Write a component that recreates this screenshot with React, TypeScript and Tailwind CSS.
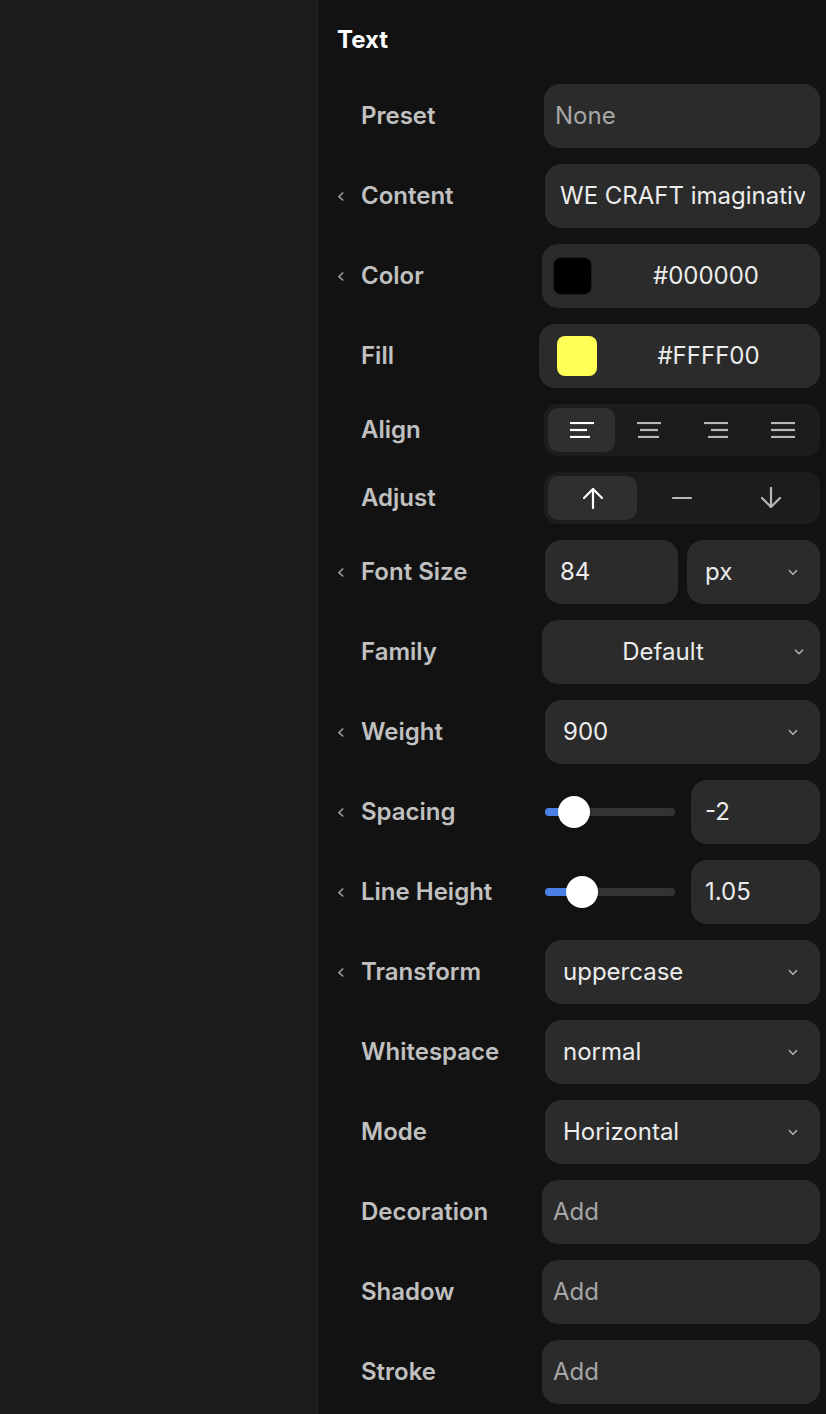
import type { ReactNode } from 'react';

const font = { fontFamily: 'Inter, "Noto Sans", sans-serif' };

// small "‹" toggle next to expandable props
const Caret = () => (
  <svg width="8" height="11" viewBox="0 0 8 11" className="text-[#9c9c9c]">
    <polyline points="6.2,1.5 2,5.5 6.2,9.5" fill="none" stroke="currentColor" strokeWidth="1.7" />
  </svg>
);

const ChevronDown = () => (
  <svg width="10" height="7" viewBox="0 0 10 7" className="text-[#b0b0b0]">
    <polyline points="1,1.2 5,5.2 9,1.2" fill="none" stroke="currentColor" strokeWidth="1.6" />
  </svg>
);

const Row = ({
  label,
  caret,
  tall = true,
  children,
}: {
  label: string;
  caret?: boolean;
  tall?: boolean;
  children: ReactNode;
}) => (
  <div className={tall ? 'flex items-center h-16' : 'flex items-center h-[52px]'}>
    <div className="w-6 shrink-0 flex items-center">{caret && <Caret />}</div>
    <div className="w-[182px] shrink-0 text-[24px] font-semibold text-[#c0c0c0] leading-none">{label}</div>
    <div className="flex-1 flex h-full min-w-0">{children}</div>
  </div>
);

const Field = ({ className = '', children }: { className?: string; children: ReactNode }) => (
  <div className={`flex-1 h-full bg-[#2b2b2b] rounded-[16px] flex items-center text-[24px] min-w-0 ${className}`}>
    {children}
  </div>
);

const Select = ({ value, className = '' }: { value: string; className?: string }) => (
  <Field className={`pl-[18px] pr-[22px] ${className}`}>
    <span className="flex-1 text-[#ececec]">{value}</span>
    <ChevronDown />
  </Field>
);

const Swatch = ({ color, hex, className }: { color: string; hex: string; className: string }) => (
  <Field className={className}>
    <div className={`shrink-0 rounded-[8px] ${color}`} />
    <span className="flex-1 text-center text-[#ececec]">{hex}</span>
  </Field>
);

const AlignIcon = ({ kind, active }: { kind: 'left' | 'center' | 'right' | 'justify'; active?: boolean }) => {
  const lines: Record<string, [number, number][]> = {
    left: [[0, 24], [0, 17], [0, 20]],
    center: [[0, 24], [3, 21], [1, 22]],
    right: [[0, 24], [7, 24], [4, 24]],
    justify: [[0, 24], [0, 24], [0, 24]],
  };
  return (
    <svg width="24" height="16" viewBox="0 0 24 16" className={active ? 'text-white' : 'text-[#b8b8b8]'}>
      {lines[kind].map(([a, b], i) => (
        <line key={i} x1={a} x2={b} y1={1 + i * 7} y2={1 + i * 7} stroke="currentColor" strokeWidth="2.2" />
      ))}
    </svg>
  );
};

const ArrowUp = () => (
  <svg width="22" height="22" viewBox="0 0 22 22" className="text-white">
    <line x1="11" y1="2" x2="11" y2="21" stroke="currentColor" strokeWidth="2.2" strokeLinecap="round" />
    <polyline points="2,11 11,2 20,11" fill="none" stroke="currentColor" strokeWidth="2.2" strokeLinecap="round" strokeLinejoin="round" />
  </svg>
);

const ArrowDown = () => (
  <svg width="22" height="22" viewBox="0 0 22 22" className="text-[#b8b8b8]">
    <line x1="11" y1="1" x2="11" y2="20" stroke="currentColor" strokeWidth="2.2" strokeLinecap="round" />
    <polyline points="2,11 11,20 20,11" fill="none" stroke="currentColor" strokeWidth="2.2" strokeLinecap="round" strokeLinejoin="round" />
  </svg>
);

const Dash = () => (
  <svg width="20" height="4" viewBox="0 0 20 4" className="text-[#b8b8b8]">
    <line x1="1" y1="2" x2="19" y2="2" stroke="currentColor" strokeWidth="2.2" strokeLinecap="round" />
  </svg>
);

const Slider = ({ pos, value }: { pos: number; value: string }) => (
  <div className="flex-1 flex items-center gap-4 ml-px min-w-0">
    <div className="relative flex-1 h-2 rounded-full bg-[#333333]">
      <div className="absolute left-0 top-0 h-2 rounded-full bg-[#4c80e6]" style={{ width: pos }} />
      <div
        className="absolute top-1/2 w-8 h-8 -mt-4 -ml-4 rounded-full bg-white shadow"
        style={{ left: pos }}
      />
    </div>
    <div className="w-[129px] shrink-0 h-full bg-[#2b2b2b] rounded-[16px] flex items-center pl-[14px] text-[24px] text-[#ececec]">
      {value}
    </div>
  </div>
);

const App = () => {
  return (
    <div className="flex w-full h-screen min-h-[1414px] overflow-hidden" style={font}>
      {/* canvas side */}
      <div className="w-[317px] shrink-0 bg-[#1c1c1c]" />
      <div className="w-px shrink-0 bg-[#262626]" />

      {/* inspector */}
      <div className="flex-1 min-w-0 bg-[#121212] pl-5 pr-[6px]">
        <div className="pt-[26px] pb-[30px] -ml-px text-[24px] leading-[28px] font-bold text-white">Text</div>

        <div className="flex flex-col gap-4 -ml-px">
          <Row label="Preset">
            <Field className="ml-px px-[11px] text-[#a6a6a6]">None</Field>
          </Row>

          <Row label="Content" caret>
            <Field className="ml-[2px] px-[15px]">
              <div className="flex-1 min-w-0 overflow-hidden whitespace-nowrap text-[#ececec]">
                WE CRAFT imaginative digital experiences
              </div>
            </Field>
          </Row>

          <Row label="Color" caret>
            <Swatch
              className="-ml-px pl-[11px]"
              color="w-[39px] h-[38px] bg-black border border-[#1f1f1f]"
              hex="#000000"
            />
          </Row>

          <Row label="Fill">
            <Swatch className="-ml-[4px] pl-[18px]" color="w-10 h-10 bg-[#ffff55]" hex="#FFFF00" />
          </Row>

          <Row label="Align" tall={false}>
            <div className="flex-1 ml-px grid grid-cols-4 p-1 bg-[#1c1c1c] rounded-[14px]">
              <div className="flex items-center justify-center rounded-[10px] bg-[#2f2f2f]">
                <AlignIcon kind="left" active />
              </div>
              <div className="flex items-center justify-center">
                <AlignIcon kind="center" />
              </div>
              <div className="flex items-center justify-center">
                <AlignIcon kind="right" />
              </div>
              <div className="flex items-center justify-center">
                <AlignIcon kind="justify" />
              </div>
            </div>
          </Row>

          <Row label="Adjust" tall={false}>
            <div className="flex-1 ml-px grid grid-cols-3 p-1 bg-[#1c1c1c] rounded-[14px]">
              <div className="flex items-center justify-center rounded-[10px] bg-[#2f2f2f]">
                <ArrowUp />
              </div>
              <div className="flex items-center justify-center">
                <Dash />
              </div>
              <div className="flex items-center justify-center">
                <ArrowDown />
              </div>
            </div>
          </Row>

          <Row label="Font Size" caret>
            <div className="flex-1 grid grid-cols-2 gap-[9px] ml-[2px] min-w-0">
              <Field className="px-[15px] text-[#ececec]">84</Field>
              <Select value="px" className="pl-[17px] pr-[22px]" />
            </div>
          </Row>

          <Row label="Family">
            <Field className="-ml-px relative">
              <span className="flex-1 text-center pl-4 pr-[52px] text-[#ececec]">Default</span>
              <div className="absolute right-4 top-1/2 -translate-y-1/2 flex">
                <ChevronDown />
              </div>
            </Field>
          </Row>

          <Row label="Weight" caret>
            <Select value="900" className="ml-[2px]" />
          </Row>

          <Row label="Spacing" caret>
            <div className="flex-1 flex ml-px min-w-0">
              <Slider pos={29} value="-2" />
            </div>
          </Row>

          <Row label="Line Height" caret>
            <div className="flex-1 flex ml-px min-w-0">
              <Slider pos={37} value="1.05" />
            </div>
          </Row>

          <Row label="Transform" caret>
            <Select value="uppercase" className="ml-[2px]" />
          </Row>

          <Row label="Whitespace">
            <Select value="normal" className="ml-[2px]" />
          </Row>

          <Row label="Mode">
            <Select value="Horizontal" className="ml-[2px]" />
          </Row>

          <Row label="Decoration">
            <Field className="-ml-px px-[11px] text-[#a6a6a6]">Add</Field>
          </Row>

          <Row label="Shadow">
            <Field className="-ml-px px-[11px] text-[#a6a6a6]">Add</Field>
          </Row>

          <Row label="Stroke">
            <Field className="-ml-px px-[11px] text-[#a6a6a6]">Add</Field>
          </Row>
        </div>
      </div>
    </div>
  );
};

export default App;
